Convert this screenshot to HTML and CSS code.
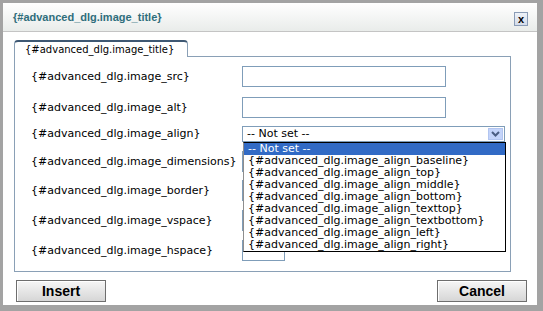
FILE: index.html
```html
<!DOCTYPE html>
<html lang="en">
<head>
  <meta charset="UTF-8">
  <title>{#advanced_dlg.image_title}</title>
  <link rel="stylesheet" href="styles.css">
</head>
<body>

  <div class="dialog">
    <header class="dlg-head">
      <span class="dlg-title">{#advanced_dlg.image_title}</span>
      <button class="dlg-close">x</button>
    </header>

    <div class="tabs">
      <span class="tab current">{#advanced_dlg.image_title}</span>
    </div>

    <div class="panel">
      <div class="form-grid">
        <label>{#advanced_dlg.image_src}</label>
        <div><input type="text" class="field"></div>

        <label>{#advanced_dlg.image_alt}</label>
        <div><input type="text" class="field"></div>

        <label>{#advanced_dlg.image_align}</label>
        <div class="select-wrap">
          <div class="select">
            <span>-- Not set --</span>
            <span class="select-arrow">
              <svg width="9" height="6" viewBox="0 0 9 6"><path d="M1 1 L4.5 4.5 L8 1" fill="none" stroke="#4a5d82" stroke-width="2"/></svg>
            </span>
          </div>
          <ul class="select-list">
            <li class="selected">-- Not set --</li>
            <li>{#advanced_dlg.image_align_baseline}</li>
            <li>{#advanced_dlg.image_align_top}</li>
            <li>{#advanced_dlg.image_align_middle}</li>
            <li>{#advanced_dlg.image_align_bottom}</li>
            <li>{#advanced_dlg.image_align_texttop}</li>
            <li>{#advanced_dlg.image_align_textbottom}</li>
            <li>{#advanced_dlg.image_align_left}</li>
            <li>{#advanced_dlg.image_align_right}</li>
          </ul>
        </div>

        <label>{#advanced_dlg.image_dimensions}</label>
        <div><input type="text" class="field small"></div>

        <label>{#advanced_dlg.image_border}</label>
        <div><input type="text" class="field small"></div>

        <label>{#advanced_dlg.image_vspace}</label>
        <div><input type="text" class="field small"></div>

        <label>{#advanced_dlg.image_hspace}</label>
        <div><input type="text" class="field small"></div>
      </div>
    </div>

    <div class="actions">
      <button class="btn">Insert</button>
      <button class="btn">Cancel</button>
    </div>
  </div>

</body>
</html>
```

FILE: styles.css
```css
body {
  margin: 0;
  background-color: #a3a3a3;
  font-family: "DejaVu Sans", Verdana, sans-serif;
  font-size: 11px;
  color: #000;
}

.dialog {
  margin: 3px 6px 6px 3px;
  width: 534px;
  height: 302px;
  background: #fff;
}

.dlg-head {
  height: 28px;
  padding: 0 9px 0 10px;
  display: flex;
  justify-content: space-between;
  align-items: center;
  background: linear-gradient(#ffffff, #e9ecea);
  border-bottom: 1px solid #c4c4c4;
}

.dlg-title {
  font-family: "Liberation Sans", Arial, sans-serif;
  font-weight: bold;
  font-size: 11px;
  color: #2f6e7c;
}

.dlg-close {
  width: 14px;
  height: 14px;
  margin-top: 4px;
  padding: 0;
  border: 1px solid #8a9cb6;
  background: linear-gradient(#eef2f8, #d3dcea);
  font-family: "Liberation Sans", Arial, sans-serif;
  font-weight: bold;
  font-size: 11px;
  line-height: 10px;
}

.tabs {
  padding: 8px 0 0 11px;
  display: flex;
}

.tab {
  width: 174px;
  height: 17px;
  box-sizing: border-box;
  margin-bottom: -1px;
  padding-left: 10px;
  font-size: 10px;
  line-height: 15px;
  background: #fff;
  border: 1px solid #8aa0b6;
  border-top: 2px solid #3e5873;
  border-bottom: none;
  border-radius: 4px 4px 0 0;
  position: relative;
}

.panel {
  margin-left: 11px;
  width: 497px;
  height: 216px;
  box-sizing: border-box;
  border: 1px solid #8aa0b6;
  padding: 4px 0 0 16px;
}

.form-grid {
  display: grid;
  grid-template-columns: 211px auto;
  grid-template-rows: 31px 31px 21px 35px 23px 37px 23px;
  align-items: center;
}

.field {
  width: 204px;
  height: 21px;
  box-sizing: border-box;
  border: 1px solid #7f9db9;
  margin: 0;
  padding: 0 2px;
  font: inherit;
}

.field.small {
  width: 43px;
}

.select-wrap {
  position: relative;
}

.select {
  width: 263px;
  height: 16px;
  box-sizing: border-box;
  border: 1px solid #7f9db9;
  padding-left: 4px;
  display: flex;
  justify-content: space-between;
  align-items: center;
}

.select-arrow {
  width: 15px;
  height: 12px;
  margin-right: 1px;
  display: flex;
  align-items: center;
  justify-content: center;
  background: #c4d4fa;
  border: 1px solid #b2c5f0;
  box-sizing: border-box;
}

.select-list {
  position: absolute;
  top: 16px;
  left: 1px;
  width: 263px;
  box-sizing: border-box;
  margin: 0;
  padding: 0;
  list-style: none;
  background: #fff;
  border: 1px solid #000;
  border-left-color: #8e8e8e;
  z-index: 2;
}

.select-list li {
  height: 12px;
  line-height: 12px;
  padding-left: 4px;
  white-space: nowrap;
}

.select-list li.selected {
  background: #316ac5;
  color: #fff;
}

.actions {
  display: flex;
  justify-content: space-between;
  padding: 8px 10px 0 13px;
}

.btn {
  width: 90px;
  height: 22px;
  padding: 0;
  border: 1px solid #6e6e6e;
  background: linear-gradient(#f6f6f6, #d6d6d6);
  box-shadow: inset 1px 1px 0 #fff;
  font-family: "Liberation Sans", Arial, sans-serif;
  font-weight: bold;
  font-size: 14px;
  color: #000;
}
```
